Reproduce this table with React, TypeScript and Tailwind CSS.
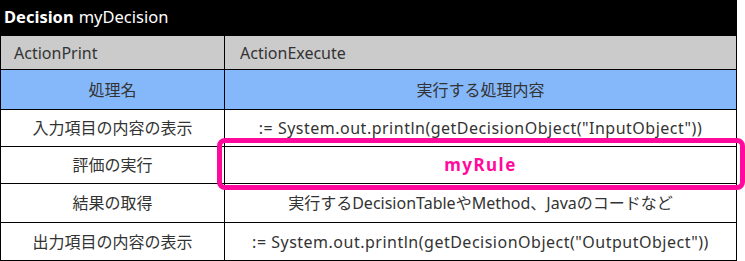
const rows = [
  { name: "入力項目の内容の表示", body: ':= System.out.println(getDecisionObject("InputObject"))', h: "h-[37px]", code: true },
  { name: "評価の実行", body: "myRule", h: "h-[37px]", rule: true },
  { name: "結果の取得", body: "実行するDecisionTableやMethod、Javaのコードなど", h: "h-[39px]" },
  { name: "出力項目の内容の表示", body: ':= System.out.println(getDecisionObject("OutputObject"))', h: "h-[38px]", code: true },
];

export default function App() {
  return (
    <div className="relative w-[745px] h-[261px] bg-white overflow-hidden font-['Noto_Sans','Noto_Sans_CJK_JP',sans-serif] text-[16px] text-[#333]">
      <div className="w-[737px]">
        {/* title */}
        <div className="h-[35px] bg-black text-white text-[16.5px] flex items-center pl-[4px] leading-none">
          <span className="font-bold">Decision</span>
          <span className="ml-[5px]">myDecision</span>
        </div>

        <div className="border-t border-l border-r border-black">
          {/* action names */}
          <div className="flex h-[34px] bg-[#cbcbcb] border-b border-black">
            <div className="w-[224px] border-r border-black flex items-center pl-[13px]">ActionPrint</div>
            <div className="flex-1 flex items-center pl-[15px]">ActionExecute</div>
          </div>

          {/* column header */}
          <div className="flex h-[40px] bg-[#85b8fa] border-b border-black">
            <div className="w-[224px] border-r border-black flex items-center justify-center">処理名</div>
            <div className="flex-1 flex items-center justify-center">実行する処理内容</div>
          </div>

          {rows.map(({ name, body, h, rule, code }) => (
            <div key={name} className={`flex ${h} border-b border-black`}>
              <div className="w-[224px] border-r border-black flex items-center justify-center">{name}</div>
              <div
                className={
                  rule
                    ? "flex-1 flex items-center justify-center font-bold text-[17px] tracking-[1.5px] text-[#ff0a9c]"
                    : code
                      ? "flex-1 flex items-center justify-center tracking-[0.5px]"
                      : "flex-1 flex items-center justify-center"
                }
              >
                {body}
              </div>
            </div>
          ))}
        </div>
      </div>

      {/* highlight */}
      <div className="absolute left-[217px] top-[138px] w-[528px] h-[52px] border-[5px] border-[#ff0a9c] rounded-[8px]" />
    </div>
  );
}
